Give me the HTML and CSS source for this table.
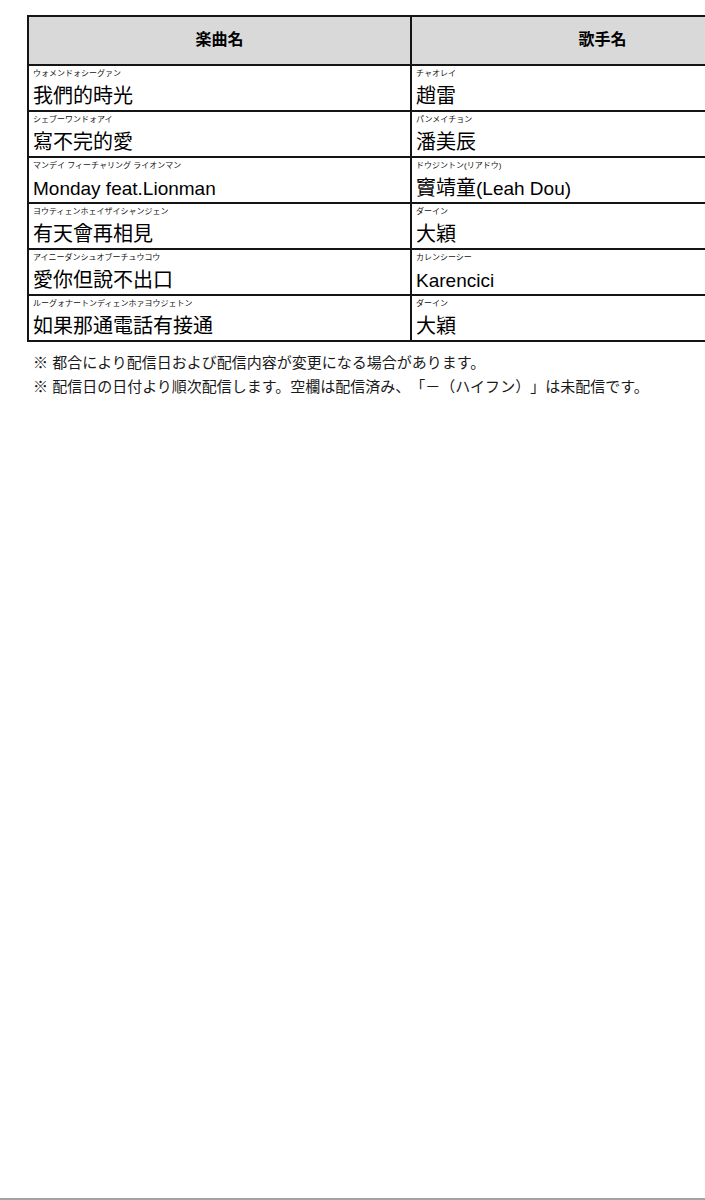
FILE: index.html
```html
<!DOCTYPE html>
<html lang="ja">
<head>
<meta charset="utf-8">
<title>配信楽曲一覧</title>
<link rel="stylesheet" href="styles.css">
</head>
<body>
<div class="page">
  <table class="songs">
    <colgroup><col class="c1"><col class="c2"></colgroup>
    <thead>
      <tr><th>楽曲名</th><th>歌手名</th></tr>
    </thead>
    <tbody>
      <tr>
        <td><div class="kana">ウォメンドォシーグァン</div><div class="main">我們的時光</div></td>
        <td><div class="kana">チャオレイ</div><div class="main">趙雷</div></td>
      </tr>
      <tr>
        <td><div class="kana">シェブーワンドォアイ</div><div class="main">寫不完的愛</div></td>
        <td><div class="kana">パンメイチョン</div><div class="main">潘美辰</div></td>
      </tr>
      <tr>
        <td><div class="kana">マンデイ フィーチャリング ライオンマン</div><div class="main"><span class="lat">Monday feat.Lionman</span></div></td>
        <td><div class="kana">ドウジントン(リアドウ)</div><div class="main">竇靖童<span class="lat">(Leah Dou)</span></div></td>
      </tr>
      <tr>
        <td><div class="kana">ヨウティェンホェイザイシャンジェン</div><div class="main">有天會再相見</div></td>
        <td><div class="kana">ダーイン</div><div class="main">大穎</div></td>
      </tr>
      <tr>
        <td><div class="kana">アイニーダンシュオブーチュウコウ</div><div class="main">愛你但說不出口</div></td>
        <td><div class="kana">カレンシーシー</div><div class="main"><span class="lat">Karencici</span></div></td>
      </tr>
      <tr>
        <td><div class="kana">ルーグォナートンディェンホァヨウジェトン</div><div class="main">如果那通電話有接通</div></td>
        <td><div class="kana">ダーイン</div><div class="main">大穎</div></td>
      </tr>
    </tbody>
  </table>
  <div class="notes">
    <p>※ 都合により配信日および配信内容が変更になる場合があります。</p>
    <p>※ 配信日の日付より順次配信します。空欄は配信済み、「－（ハイフン）」は未配信です。</p>
  </div>
</div>
</body>
</html>
```

FILE: styles.css
```css
html, body {
  margin: 0;
  padding: 0;
  background: #ffffff;
}
body {
  font-family: "Liberation Sans", "Noto Sans CJK JP", sans-serif;
  color: #000;
  overflow: hidden;
}
.page {
  box-sizing: border-box;
  min-height: 100vh;
  height: 1200px;
  border-bottom: 2px solid #a3a3a3;
  padding-top: 15px;
  padding-left: 27px;
  overflow: hidden;
}
.songs {
  border-collapse: collapse;
  table-layout: fixed;
  width: 768px;
  border: 2px solid #151515;
}
.songs col.c1, .songs col.c2 { width: 383px; }
.songs th {
  height: 49px;
  padding: 0 0 5px 0;
  box-sizing: border-box;
  background: #d9d9d9;
  border: 2px solid #151515;
  font-size: 16px;
  font-weight: bold;
  text-align: center;
  vertical-align: middle;
}
.songs td {
  height: 44px;
  padding: 2px 4px 1px 4px;
  border: 2px solid #151515;
  vertical-align: top;
  box-sizing: border-box;
}
.kana {
  font-size: 8px;
  line-height: 12px;
  color: #111;
  white-space: nowrap;
}
.main {
  margin-top: 4px;
  font-size: 20px;
  line-height: 25px;
  white-space: nowrap;
}
.main .lat {
  font-size: 19px;
}
.notes {
  margin-top: 9px;
  padding-left: 6px;
  font-size: 15px;
  line-height: 24px;
  color: #1a1a1a;
  text-spacing-trim: space-all;
}
.notes p {
  margin: 0;
}
```
